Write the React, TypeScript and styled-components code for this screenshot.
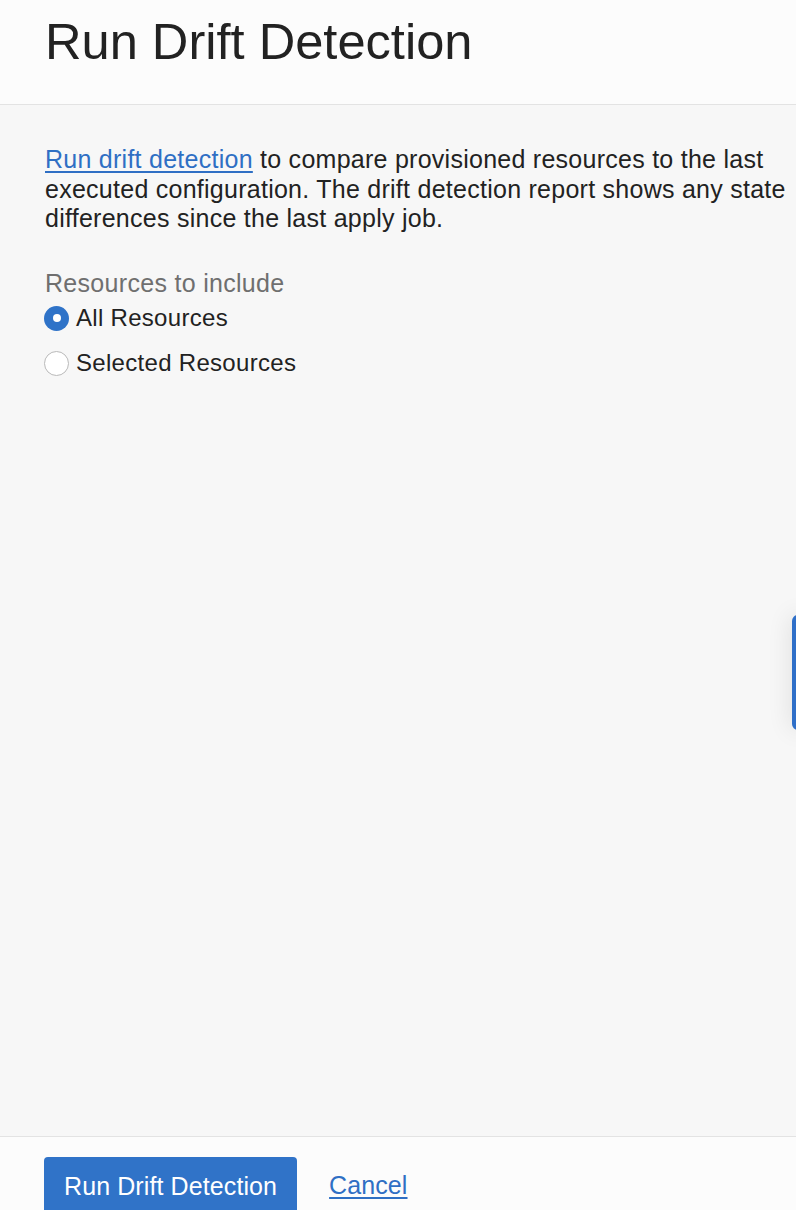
import React from "react";
import styled, { createGlobalStyle } from "styled-components";

const Global = createGlobalStyle`
  html, body { margin: 0; padding: 0; overflow: hidden; }
  body { font-family: "Liberation Sans", Arial, sans-serif; color: #222; background: #f7f7f7; }
`;

const Page = styled.div`
  position: relative;
  display: flex;
  flex-direction: column;
  width: 796px;
`;

const Header = styled.header`
  height: 104px;
  background: #fcfcfc;
  border-bottom: 1px solid #e3e3e3;
  padding: 0 45px;
  box-sizing: content-box;
  display: flex;
  align-items: flex-start;
`;

const Title = styled.h1`
  margin: 12px 0 0;
  font-size: 50.6px;
  font-weight: 400;
  line-height: 60px;
  color: #222;
`;

const Main = styled.main`
  height: 1031px;
  box-sizing: border-box;
  padding: 40px 0 0 45px;
  background: #f7f7f7;
`;

const Description = styled.p`
  margin: 0;
  font-size: 25px;
  letter-spacing: 0.26px;
  line-height: 29.5px;
  color: #222;
  width: 751px;
`;

const Link = styled.a`
  color: #2f6fc4;
  text-decoration: underline;
  text-underline-offset: 3px;
  text-decoration-thickness: 2px;
  cursor: pointer;
`;

const Fieldset = styled.div`
  margin-top: 34px;
  display: flex;
  flex-direction: column;
`;

const Legend = styled.div`
  font-size: 25px;
  letter-spacing: 0.3px;
  line-height: 30px;
  color: #6f6f6f;
`;

const Option = styled.label`
  display: flex;
  align-items: center;
  gap: 7px;
  height: 45px;
  font-size: 24px;
  letter-spacing: 0.3px;
  color: #222;
  margin-left: -1px;
  &:first-of-type { margin-top: -2px; }
`;

const Radio = styled.span<{ $checked?: boolean }>`
  width: 25px;
  height: 25px;
  flex: none;
  border-radius: 50%;
  box-sizing: border-box;
  display: flex;
  align-items: center;
  justify-content: center;
  background: ${(p) => (p.$checked ? "#2f73c8" : "#fff")};
  border: ${(p) => (p.$checked ? "none" : "1px solid #b9b9b9")};
  &::after {
    content: "";
    display: ${(p) => (p.$checked ? "block" : "none")};
    width: 8px;
    height: 8px;
    border-radius: 50%;
    background: #fff;
  }
`;

const Footer = styled.footer`
  border-top: 1px solid #e3e3e3;
  background: #fcfcfc;
  padding: 20px 44px;
  display: flex;
  align-items: center;
  gap: 32px;
`;

const Button = styled.button`
  height: 58px;
  padding: 0 20px;
  background: #3073c8;
  color: #fff;
  border: none;
  border-radius: 4px;
  font-family: "Liberation Sans", Arial, sans-serif;
  font-size: 25px;
  letter-spacing: 0.1px;
  cursor: pointer;
`;

const CancelLink = styled(Link)`
  font-size: 25px;
  letter-spacing: 0.1px;
  margin-top: -2px;
`;

const SideTab = styled.div`
  position: absolute;
  right: -12px;
  top: 615px;
  width: 16px;
  height: 115px;
  background: #2f6fc8;
  border-radius: 6px;
  box-shadow: 0 0 24px rgba(0, 0, 0, 0.12);
`;

export default function App() {
  return (
    <Page>
      <Global />
      <Header>
        <Title>Run Drift Detection</Title>
      </Header>
      <Main>
        <Description>
          <Link>Run drift detection</Link> to compare provisioned resources to the last
          executed configuration. The drift detection report shows any state
          differences since the last apply job.
        </Description>
        <Fieldset>
          <Legend>Resources to include</Legend>
          <Option>
            <Radio $checked />
            All Resources
          </Option>
          <Option>
            <Radio />
            Selected Resources
          </Option>
        </Fieldset>
      </Main>
      <Footer>
        <Button>Run Drift Detection</Button>
        <CancelLink>Cancel</CancelLink>
      </Footer>
      <SideTab />
    </Page>
  );
}
